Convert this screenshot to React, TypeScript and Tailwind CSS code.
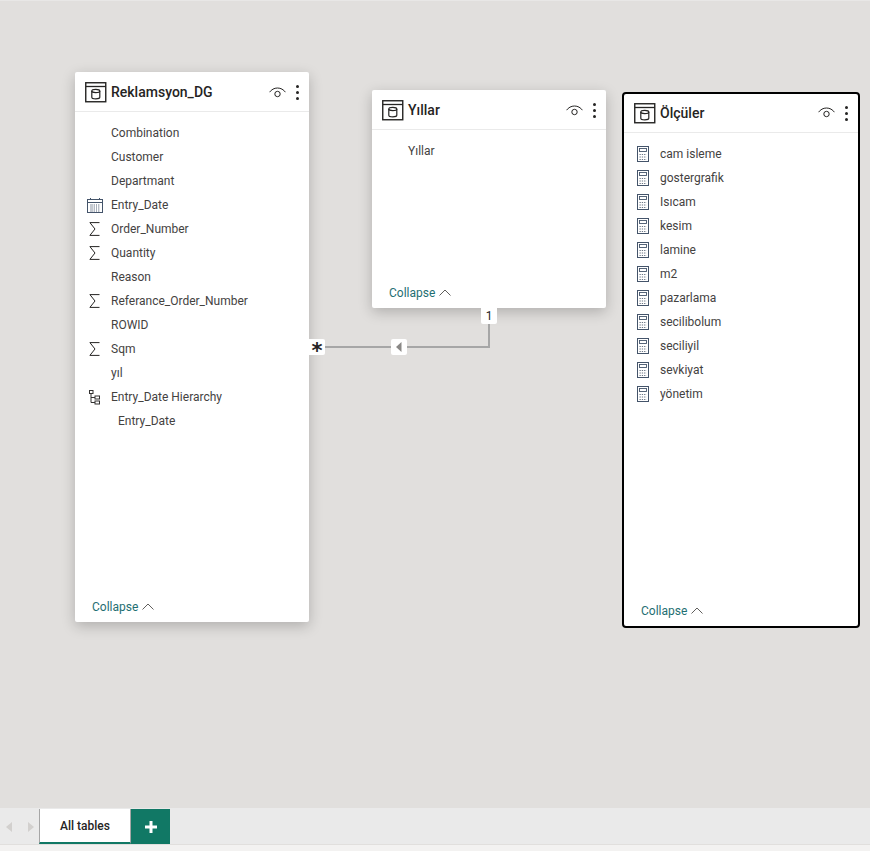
import type { ReactNode } from 'react'

type Field = { name: string; icon?: 'sigma' | 'calendar' | 'hierarchy' | 'calc'; indent?: boolean }

const reklamsyonFields: Field[] = [
  { name: 'Combination' },
  { name: 'Customer' },
  { name: 'Departmant' },
  { name: 'Entry_Date', icon: 'calendar' },
  { name: 'Order_Number', icon: 'sigma' },
  { name: 'Quantity', icon: 'sigma' },
  { name: 'Reason' },
  { name: 'Referance_Order_Number', icon: 'sigma' },
  { name: 'ROWID' },
  { name: 'Sqm', icon: 'sigma' },
  { name: 'yıl' },
  { name: 'Entry_Date Hierarchy', icon: 'hierarchy' },
  { name: 'Entry_Date', indent: true },
]

const olculerFields: Field[] = [
  'cam isleme',
  'gostergrafik',
  'Isıcam',
  'kesim',
  'lamine',
  'm2',
  'pazarlama',
  'secilibolum',
  'seciliyil',
  'sevkiyat',
  'yönetim',
].map((name) => ({ name, icon: 'calc' as const }))

function TableIcon() {
  return (
    <svg width="22" height="21" viewBox="0 0 22 21" fill="none" stroke="#252423" className="shrink-0">
      <rect x="0.75" y="0.75" width="20" height="19" strokeWidth="1.4" />
      <path d="M1 4.5h20" strokeWidth="1.3" />
      <ellipse cx="10.8" cy="9" rx="4" ry="1.6" strokeWidth="1.2" />
      <path d="M6.8 9v6.2c0 .9 1.8 1.6 4 1.6s4-.7 4-1.6V9" strokeWidth="1.2" />
    </svg>
  )
}

function EyeIcon() {
  return (
    <svg width="17" height="12" viewBox="0 0 17 12" fill="none" stroke="#252423" strokeWidth="1">
      <path d="M.6 5.2C2.4 2.6 5.2 1 8.5 1s6.1 1.6 7.9 4.2" />
      <circle cx="8.5" cy="7" r="2.7" />
    </svg>
  )
}

function DotsIcon() {
  return (
    <div className="flex h-[15px] w-[3px] flex-col justify-between">
      <span className="size-[3px] rounded-full bg-[#252423]" />
      <span className="size-[3px] rounded-full bg-[#252423]" />
      <span className="size-[3px] rounded-full bg-[#252423]" />
    </div>
  )
}

function SigmaIcon() {
  return (
    <svg width="11" height="14" viewBox="0 0 11 14" fill="none" stroke="#252423" strokeWidth="1">
      <path d="M10.5 .6H.9L6 7 .9 13.4h9.6" />
    </svg>
  )
}

function CalendarIcon() {
  return (
    <svg width="16" height="15" viewBox="0 0 16 15" fill="none" stroke="#44546a" strokeWidth="1">
      <rect x=".5" y="1.5" width="15" height="13" />
      <path d="M.5 4.5h15M3.5 0v2M12.5 0v2" />
      <path d="M3 7h10M3 9h10M3 11h10M3 13h10M4.5 6.5v7M7 6.5v7M9.5 6.5v7M12 6.5v7" stroke="#8a94a3" strokeDasharray="1 1" />
    </svg>
  )
}

function HierarchyIcon() {
  return (
    <svg width="11" height="15" viewBox="0 0 11 15" fill="none" stroke="#323130" strokeWidth="1">
      <rect x=".5" y=".5" width="3.5" height="3" />
      <rect x="6" y="6" width="4.5" height="3" />
      <rect x="6" y="11" width="4.5" height="3" />
      <path d="M2 3.5v9h4M2 7.5h4" />
    </svg>
  )
}

function CalcIcon() {
  return (
    <svg width="12" height="16" viewBox="0 0 12 16" fill="none">
      <rect x=".5" y=".5" width="11" height="15" stroke="#44546a" />
      <rect x="2.5" y="2.5" width="7" height="3" stroke="#44546a" strokeWidth=".9" />
      <path d="M2.5 8.5h7M2.5 11h7M2.5 13.5h7" stroke="#6b7685" strokeDasharray="1.3 1" />
    </svg>
  )
}

function FieldRow({ field }: { field: Field }) {
  const icons: Record<string, ReactNode> = {
    sigma: <div className="pr-[2px]"><SigmaIcon /></div>,
    calendar: <CalendarIcon />,
    hierarchy: <div className="pr-[2px]"><HierarchyIcon /></div>,
    calc: <div className="pr-[2px]"><CalcIcon /></div>,
  }
  return (
    <div className="flex h-6 items-center">
      <div className="flex w-9 shrink-0 justify-center pl-[4px]">{field.icon ? icons[field.icon] : null}</div>
      <span className={`text-[12px] text-[#44423f] ${field.indent ? 'pl-[7px]' : ''}`}>{field.name}</span>
    </div>
  )
}

function TableCard({
  title,
  fields,
  className,
  selected,
}: {
  title: string
  fields: Field[]
  className: string
  selected?: boolean
}) {
  return (
    <div
      className={`absolute flex flex-col bg-white ${
        selected ? 'rounded-[4px] border-2 border-black' : 'rounded-[2px] shadow-[0_4px_14px_rgba(0,0,0,0.22)]'
      } ${className}`}
    >
      <div
        className={`flex shrink-0 items-center border-b border-[#eaeaea] px-[10px] ${
          selected ? 'h-[39px]' : 'h-[40px] pt-[2px]'
        }`}
      >
        <TableIcon />
        <span className="ml-[4px] flex-1 text-[14px] font-medium text-[#252423]">{title}</span>
        <EyeIcon />
        <div className="ml-[10px]">
          <DotsIcon />
        </div>
      </div>
      <div className="flex-1 pt-[9px]">
        {fields.map((field, i) => (
          <FieldRow key={i} field={field} />
        ))}
      </div>
      <div className="flex h-[30px] shrink-0 items-center pb-[1px] pl-[17px]">
        <span className="text-[12px] text-[#1f6f72]">Collapse</span>
        <svg width="12" height="7" viewBox="0 0 12 7" fill="none" stroke="#605e5c" strokeWidth="1" className="ml-[4px]">
          <path d="M.5 6.5 6 1l5.5 5.5" />
        </svg>
      </div>
    </div>
  )
}

export default function App() {
  return (
    <div className="flex h-[851px] w-[870px] flex-col overflow-hidden bg-[#f3f2f1] font-['Roboto','Open_Sans',sans-serif]">
      <div className="relative flex-1 border-t border-[#e8e7e6] bg-[#e1dfdd]">
        <TableCard title="Reklamsyon_DG" fields={reklamsyonFields} className="top-[71px] left-[75px] h-[550px] w-[234px]" />
        <TableCard title="Yıllar" fields={[{ name: 'Yıllar' }]} className="top-[89px] left-[372px] h-[218px] w-[234px]" />
        <TableCard title="Ölçüler" fields={olculerFields} className="top-[91px] left-[622px] h-[536px] w-[238px]" selected />

        {/* relationship line */}
        <svg className="absolute top-[306px] left-[320px]" width="175" height="46" fill="none" stroke="#a6a6a6" strokeWidth="2">
          <path d="M0 40h169V6" />
        </svg>
        <div className="absolute top-[338px] left-[309px] flex size-4 items-center justify-center rounded-r-[2px] bg-white leading-none font-bold text-[#252423]">
          <span className="mt-[9px] font-['DejaVu_Sans',sans-serif] text-[21px]">*</span>
        </div>
        <div className="absolute top-[338px] left-[391px] flex size-4 items-center justify-center rounded-[2px] bg-white">
          <svg width="6" height="10" viewBox="0 0 6 10" fill="#8a8886">
            <path d="M5.5 0v10L0 5z" />
          </svg>
        </div>
        <div className="absolute top-[307px] left-[481px] flex size-4 items-center justify-center rounded-b-[2px] bg-white text-[12px] text-[#252423]">
          1
        </div>
      </div>

      <div className="flex h-[36px] shrink-0 bg-[#eaeaea] pt-px">
        <div className="flex w-[39px] items-center justify-center gap-4 pl-px">
          <svg width="6" height="10" viewBox="0 0 6 10" fill="#d2d0ce">
            <path d="M6 0v10L0 5z" />
          </svg>
          <svg width="6" height="10" viewBox="0 0 6 10" fill="#d2d0ce">
            <path d="M0 0v10l6-5z" />
          </svg>
        </div>
        <div className="flex h-[35px] w-[92px] items-center justify-center border-x border-[#a6a6a6] border-b-[2px] border-b-[#117865] bg-white text-[12px] font-medium text-[#252423]">
          All tables
        </div>
        <div className="flex h-[35px] w-[39px] items-center justify-center bg-[#117865]">
          <svg width="12" height="12" viewBox="0 0 12 12" fill="#ffffff">
            <path d="M4.5 0h3v4.5H12v3H7.5V12h-3V7.5H0v-3h4.5z" />
          </svg>
        </div>
      </div>
      <div className="h-[7px] shrink-0 border-t border-[#e1dfdd] bg-[#f3f2f1]" />
    </div>
  )
}
